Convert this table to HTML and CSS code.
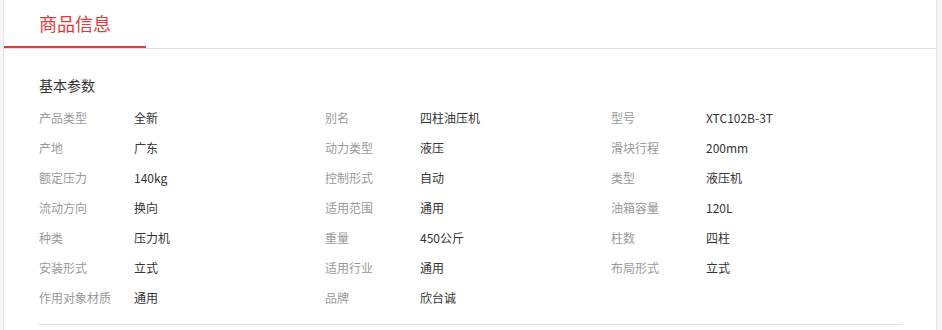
FILE: index.html
```html
<!DOCTYPE html>
<html>
<head>
    <meta charset="utf-8">
    <title>商品信息</title>
    <link rel="stylesheet" href="styles.css">
</head>
<body>
    <div class="detail">
        <div class="tabs">
            <span class="tab active">商品信息</span>
        </div>

        <div class="params">
            <h3>基本参数</h3>
            <ul class="param-list">
                <li><span class="name">产品类型</span><span class="val">全新</span></li>
                <li><span class="name">别名</span><span class="val">四柱油压机</span></li>
                <li><span class="name">型号</span><span class="val">XTC102B-3T</span></li>

                <li><span class="name">产地</span><span class="val">广东</span></li>
                <li><span class="name">动力类型</span><span class="val">液压</span></li>
                <li><span class="name">滑块行程</span><span class="val">200mm</span></li>

                <li><span class="name">额定压力</span><span class="val">140kg</span></li>
                <li><span class="name">控制形式</span><span class="val">自动</span></li>
                <li><span class="name">类型</span><span class="val">液压机</span></li>

                <li><span class="name">流动方向</span><span class="val">换向</span></li>
                <li><span class="name">适用范围</span><span class="val">通用</span></li>
                <li><span class="name">油箱容量</span><span class="val">120L</span></li>

                <li><span class="name">种类</span><span class="val">压力机</span></li>
                <li><span class="name">重量</span><span class="val">450公斤</span></li>
                <li><span class="name">柱数</span><span class="val">四柱</span></li>

                <li><span class="name">安装形式</span><span class="val">立式</span></li>
                <li><span class="name">适用行业</span><span class="val">通用</span></li>
                <li><span class="name">布局形式</span><span class="val">立式</span></li>

                <li><span class="name">作用对象材质</span><span class="val">通用</span></li>
                <li><span class="name">品牌</span><span class="val">欣台诚</span></li>
            </ul>
            <div class="divider"></div>
        </div>
    </div>
</body>
</html>
```

FILE: styles.css
```css
body {
    margin: 0;
    padding: 0 5px 0 3px;
    background-color: #f7f7f7;
    font-family: "Noto Sans CJK SC", "Noto Sans", sans-serif;
    color: #333;
}

.detail {
    background-color: #fff;
    border-left: 1px solid #e5e5e5;
    border-right: 1px solid #e5e5e5;
    height: 330px;
}

.tabs {
    display: flex;
    border-bottom: 1px solid #e0e0e0;
}

.tab {
    padding: 0 35px;
    height: 46px;
    line-height: 46px;
    font-size: 18px;
    color: #333;
    border-bottom: 2px solid transparent;
}

.tab.active {
    color: #e4393c;
    border-bottom-color: #e4393c;
}

.params {
    padding: 26px 34px 0 35px;
}

.params h3 {
    margin: 0 0 8px;
    font-size: 14px;
    font-weight: normal;
    line-height: 20px;
    color: #333;
}

.param-list {
    list-style: none;
    margin: 0;
    padding: 0;
    display: grid;
    grid-template-columns: repeat(3, 286px);
}

.param-list li {
    display: flex;
    height: 30px;
    line-height: 30px;
    font-size: 12px;
}

.name {
    width: 95px;
    color: #999;
}

.val {
    color: #333;
}

.divider {
    margin-top: 11px;
    border-top: 1px solid #e0e0e0;
}
```
